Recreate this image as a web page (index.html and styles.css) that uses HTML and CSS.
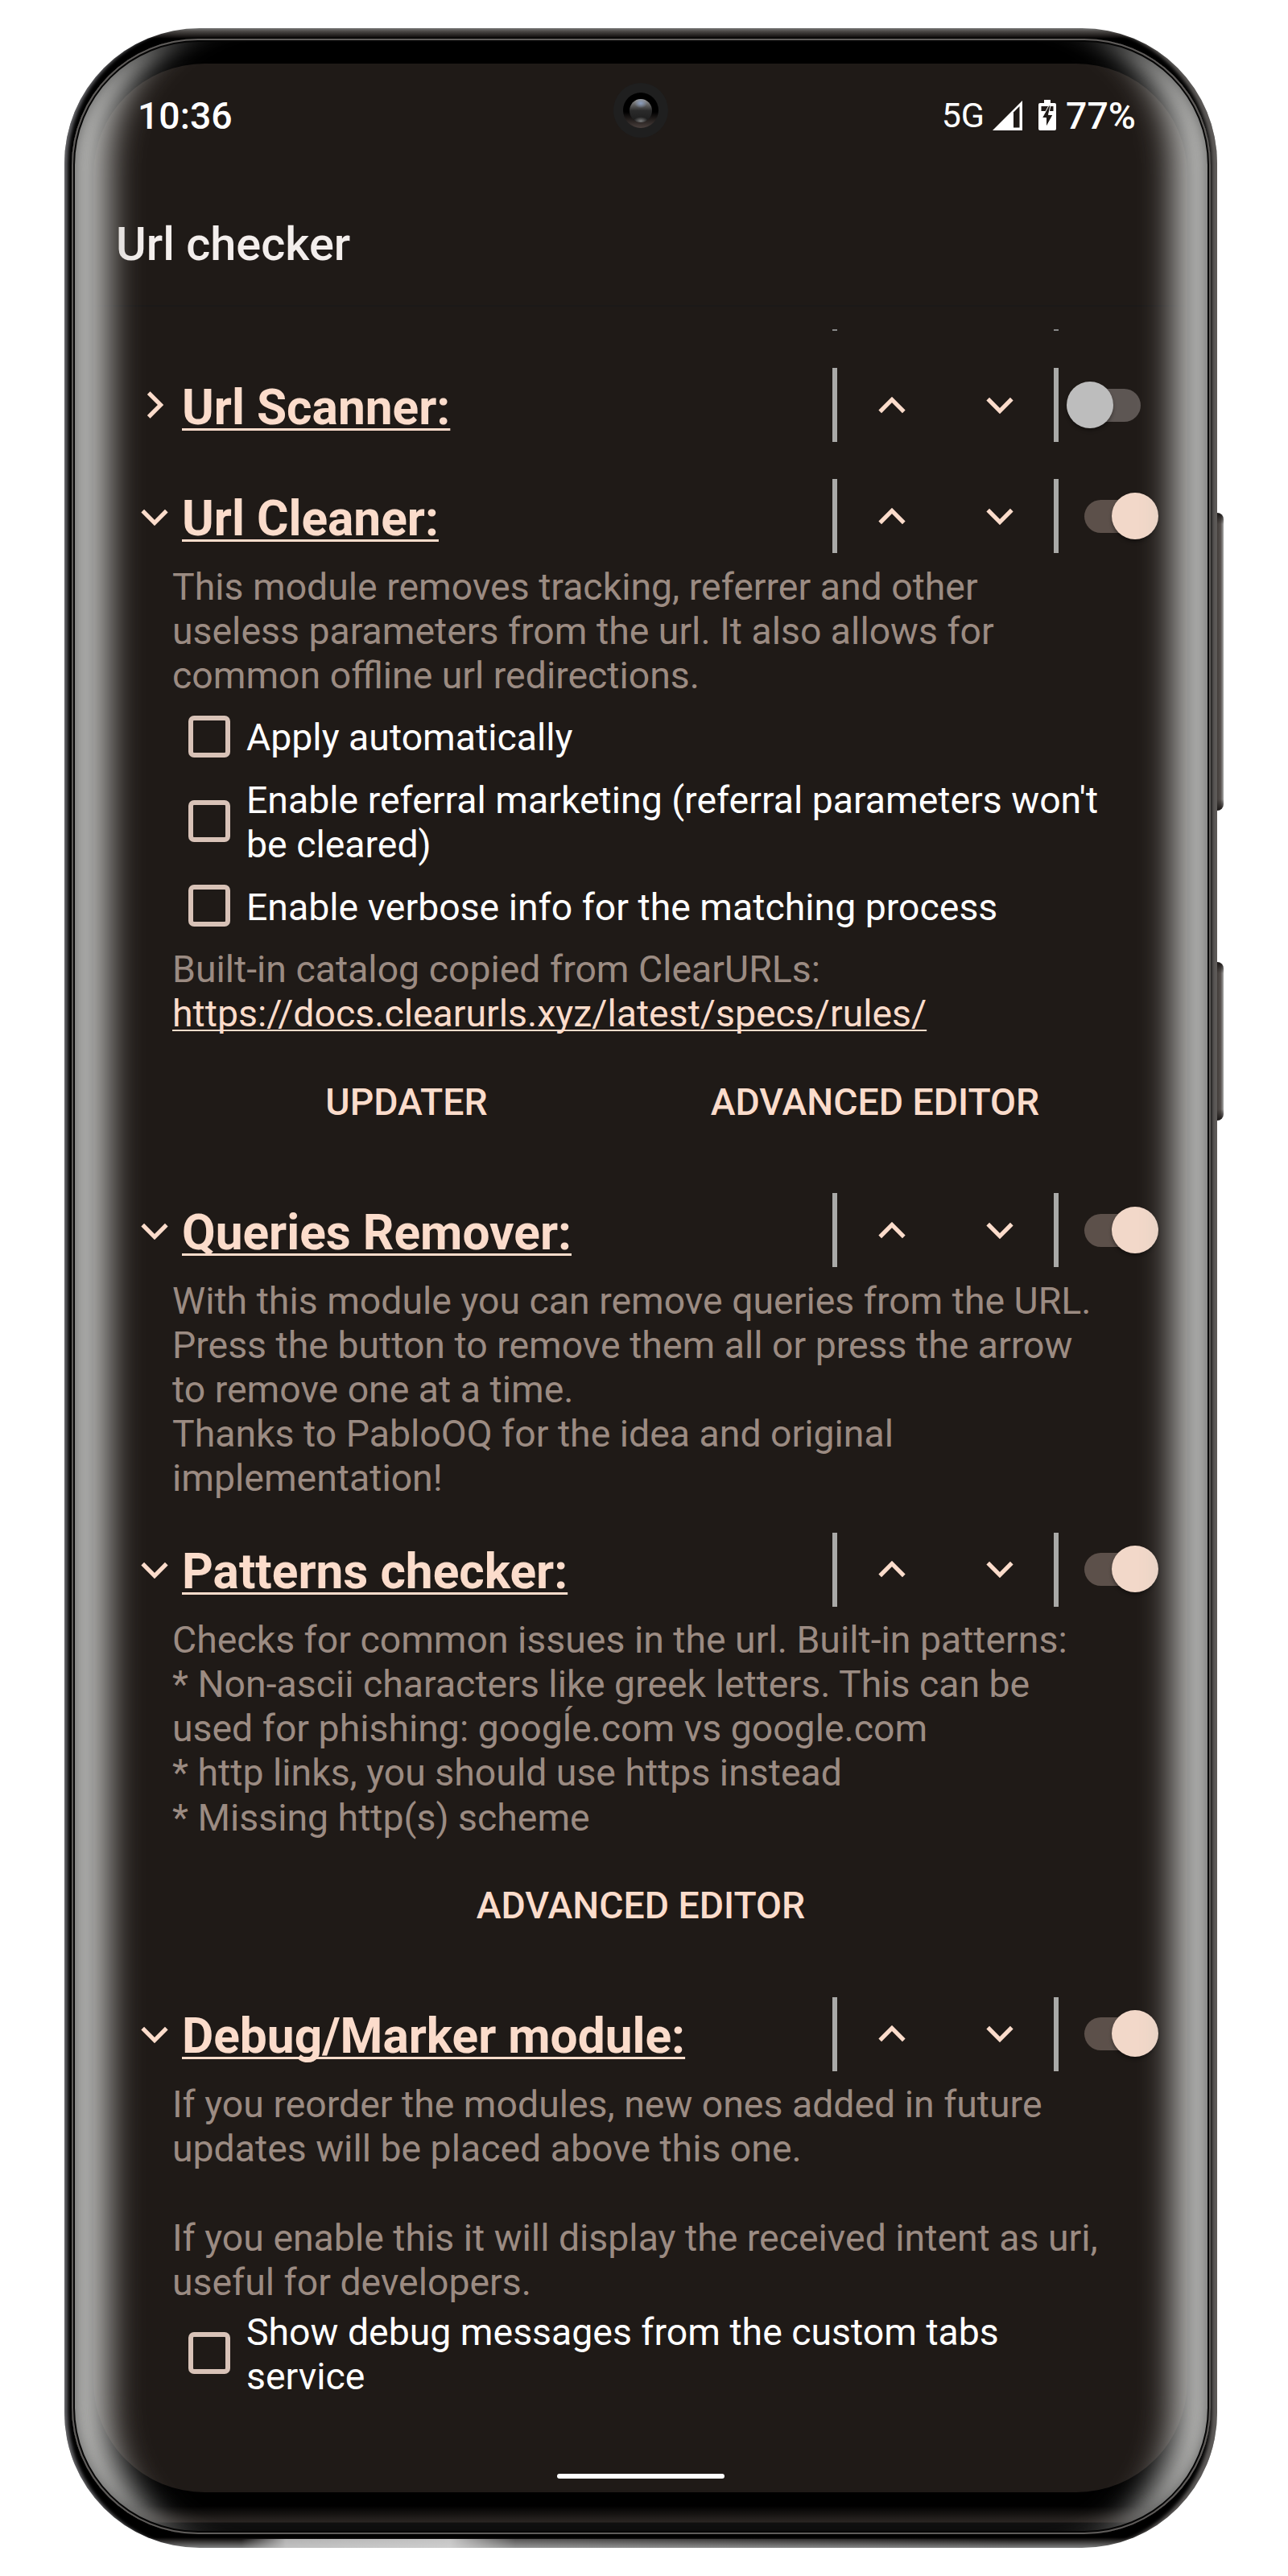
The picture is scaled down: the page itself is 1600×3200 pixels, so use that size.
FILE: index.html
```html
<!DOCTYPE html>
<html lang="en">
<head>
<meta charset="utf-8">
<title>Url checker</title>
<link rel="stylesheet" href="styles.css">
</head>
<body>
<svg class="defs" width="0" height="0" aria-hidden="true">
  <symbol id="down" viewBox="0 0 34 21"><path d="M2.2 2.700 L17 17.500 L31.8 2.700" fill="none" stroke="currentColor" stroke-width="5.2"/></symbol>
  <symbol id="up" viewBox="0 0 34 21"><path d="M2.2 18.300 L17 3.500 L31.8 18.300" fill="none" stroke="currentColor" stroke-width="5.2"/></symbol>
  <symbol id="right" viewBox="0 0 21 34"><path d="M2.700 2.2 L17.500 17 L2.700 31.8" fill="none" stroke="currentColor" stroke-width="5.2"/></symbol>
</svg>
<div class="phone">
  <span class="key key-volume"></span>
  <span class="key key-power"></span>
  <div class="rim">
    <div class="glass">
      <div class="screen">
        <header class="status">
          <span class="clock">10:36</span>
          <div class="status-right">
            <span class="net">5G</span>
            <svg class="signal" viewBox="0 0 37 37"><path d="M0 37 L37 0 V37 Z" fill="#fff"/><path d="M26 14.5 L33.5 7 V33.5 H26 Z" fill="#1f1a17"/></svg>
            <svg class="battery" viewBox="0 0 22 38"><path d="M7 0 H15 V4 H20 Q22 4 22 6 V36 Q22 38 20 38 H2 Q0 38 0 36 V6 Q0 4 2 4 H7 Z" fill="#fff"/><path d="M3.5 8 H18.500 V14 H3.500 Z" fill="#1f1a17"/><path d="M13 7 L4.500 22.500 H9.500 V34 L18 18.500 H12.500 L15 7 Z" fill="#1f1a17" stroke="#fff" stroke-width="1"/></svg>
            <span class="charge">77%</span>
          </div>
          <span class="camera"><span class="lens"></span></span>
        </header>
        <h1 class="app-title">Url checker</h1>
        <main class="list">
          <div class="cut"><i></i><i></i></div>

          <section class="module">
            <div class="head">
              <svg class="fold fold-closed"><use href="#right"/></svg><h2>Url Scanner:</h2>
              <div class="move"><svg><use href="#up"/></svg><svg><use href="#down"/></svg></div>
              <span class="switch off"></span>
            </div>
          </section>

          <section class="module">
            <div class="head">
              <svg class="fold"><use href="#down"/></svg><h2>Url Cleaner:</h2>
              <div class="move"><svg><use href="#up"/></svg><svg><use href="#down"/></svg></div>
              <span class="switch"></span>
            </div>
            <div class="body">
              <p>This module removes tracking, referrer and other<br>useless parameters from the url. It also allows for<br>common offline url redirections.</p>
              <div class="checks">
                <label class="check"><span class="box"></span><span>Apply automatically</span></label>
                <label class="check"><span class="box"></span><span>Enable referral marketing (referral parameters won't<br>be cleared)</span></label>
                <label class="check"><span class="box"></span><span>Enable verbose info for the matching process</span></label>
              </div>
              <p>Built-in catalog copied from ClearURLs:<br><a>https://docs.clearurls.xyz/latest/specs/rules/</a></p>
              <div class="buttons"><button>UPDATER</button><button>ADVANCED EDITOR</button></div>
            </div>
          </section>

          <section class="module">
            <div class="head">
              <svg class="fold"><use href="#down"/></svg><h2>Queries Remover:</h2>
              <div class="move"><svg><use href="#up"/></svg><svg><use href="#down"/></svg></div>
              <span class="switch"></span>
            </div>
            <div class="body">
              <p>With this module you can remove queries from the URL.<br>Press the button to remove them all or press the arrow<br>to remove one at a time.<br>Thanks to PabloOQ for the idea and original<br>implementation!</p>
            </div>
          </section>

          <section class="module">
            <div class="head">
              <svg class="fold"><use href="#down"/></svg><h2>Patterns checker:</h2>
              <div class="move"><svg><use href="#up"/></svg><svg><use href="#down"/></svg></div>
              <span class="switch"></span>
            </div>
            <div class="body">
              <p>Checks for common issues in the url. Built-in patterns:<br>* Non-ascii characters like greek letters. This can be<br>used for phishing: googĺe.com vs google.com<br>* http links, you should use https instead<br>* Missing http(s) scheme</p>
              <div class="buttons"><button>ADVANCED EDITOR</button></div>
            </div>
          </section>

          <section class="module">
            <div class="head">
              <svg class="fold"><use href="#down"/></svg><h2>Debug/Marker module:</h2>
              <div class="move"><svg><use href="#up"/></svg><svg><use href="#down"/></svg></div>
              <span class="switch"></span>
            </div>
            <div class="body">
              <p>If you reorder the modules, new ones added in future<br>updates will be placed above this one.<br><br>If you enable this it will display the received intent as uri,<br>useful for developers.</p>
              <label class="check tight"><span class="box"></span><span>Show debug messages from the custom tabs<br>service</span></label>
            </div>
          </section>
        </main>
        <span class="home"></span>
      </div>
    </div>
  </div>
</div>
</body>
</html>
```
FILE: styles.css
```css
* { box-sizing: border-box; }
body {
  margin: 0;
  width: 1600px;
  height: 3200px;
  overflow: hidden;
  background: #fff;
  font-family: Roboto, sans-serif;
  font-size: 46.4px;
  line-height: 55.1px;
  color: #fff;
}
h1, h2, p { margin: 0; font-weight: inherit; font-size: inherit; }
.defs { position: absolute; }

/* Phone shell */
.phone {
  position: relative;
  width: 1432px;
  height: 3130px;
  margin: 35px 0 0 80px;
}
.key {
  position: absolute;
  left: 1431px;
  width: 9px;
  border-radius: 0 8px 8px 0;
  background:
    linear-gradient(#1a1716, transparent 14px, transparent calc(100% - 14px), #1a1716),
    linear-gradient(90deg, #3d3835, #57514e 60%, #aaa);
}
.key-volume { top: 602px; height: 370px; }
.key-power { top: 1160px; height: 197px; }
.rim {
  position: relative;
  height: 3130px;
  padding: 13px 8px 17px 9px;
  border-radius: 168px;
  background:
    linear-gradient(90deg, transparent 220px, rgba(205, 205, 205, .85) 275px, rgba(215, 215, 215, .9) 480px, rgba(180, 180, 180, .4) 560px, transparent 1180px) 0 100% / 100% 11px no-repeat,
    linear-gradient(#777, #4a4745 4px, #1b1817 10px, #000 13px, #000 3117px, #2a2827 3121px, #777 3129px);
  box-shadow: inset 8px 0 4px -4px #66666a, inset -11px 0 4px -4px #5d5a58;
  overflow: hidden;
}
.glass {
  position: relative;
  height: 3100px;
  padding: 31px 29px 52px 27px;
  border-radius: 157px;
  background: linear-gradient(#000 0, #000 3065px, #2d2825 3085px, #111 3086px);
}
/* Reflections on the curved edges */
.glass::after {
  content: "";
  position: absolute;
  inset: 0;
  border-radius: 157px;
  pointer-events: none;
  box-shadow:
    inset 0 0 0 2px #5f5c5a,
    inset 0 0 0 4px #060606,
    inset 0 0 22px 0 rgba(0, 0, 0, .7),
    inset 92px 0 42px -46px #b8b8b6,
    inset -92px 0 42px -46px #b8b8b6;
}
.screen {
  position: relative;
  height: 3017px;
  border-radius: 138px;
  background: #1f1a17;
  display: flex;
  flex-direction: column;
  overflow: hidden;
}

/* Status bar */
.status {
  position: relative;
  height: 130px;
  padding: 38px 64px 0 55px;
  display: flex;
  justify-content: space-between;
  font-weight: 500;
}
.status-right { display: flex; }
.net { font-weight: 400; font-size: 43px; margin-top: -1px; }
.signal { width: 37px; height: 37px; margin: 8px 20px 0 10px; }
.battery { width: 22px; height: 38px; margin: 7px 12px 0 0; }
.camera {
  position: absolute;
  left: 646px;
  top: 24px;
  width: 68px;
  height: 68px;
  border-radius: 50%;
  background: #1f1f1f;
  padding: 12px;
}
.camera::before {
  content: "";
  display: block;
  height: 44px;
  border-radius: 50%;
  background: linear-gradient(#000 55%, #4a403d);
}
.lens {
  position: absolute;
  left: 20px;
  top: 20px;
  width: 28px;
  height: 29px;
  border-radius: 50%;
  background:
    radial-gradient(ellipse 8px 6px at 50% 18%, #8b9dbd, transparent),
    radial-gradient(ellipse 9px 5px at 50% 94%, #777, transparent),
    linear-gradient(#999, #2a2a2a 50%, #1c1c1c);
}

.app-title {
  height: 172px;
  padding: 59px 0 0 28px;
  font-size: 57.7px;
  line-height: 70px;
  font-weight: 500;
  color: #f3eeec;
  border-bottom: 2px solid #1b1918;
}

/* Module list */
.list { padding-left: 98px; }
.cut {
  display: flex;
  gap: 269px;
  height: 43px;
  padding: 28px 0 0 820px;
}
.cut i { width: 6px; height: 2px; background: #888; }
.module { margin-top: 20px; }
.head {
  display: flex;
  align-items: center;
  height: 118px;
  margin-left: -39px;
  color: #fbdccb;
}
.fold { width: 34px; height: 21px; margin: 2px 17px 0 0; }
.fold-closed { width: 21px; height: 34px; margin: 0 23px 0 7px; }
.head h2 {
  width: 808px;
  margin-top: 7px;
  font-size: 60.4px;
  line-height: 72px;
  font-weight: 700;
  white-space: nowrap;
  text-decoration: underline 3px;
  text-underline-offset: 5px;
  text-decoration-skip-ink: none;
}
.move {
  display: flex;
  align-items: center;
  justify-content: space-between;
  width: 281px;
  height: 92px;
  padding: 0 50px 0 51px;
  border: solid #a9a9a7;
  border-width: 0 6px;
}
.move svg { width: 34px; height: 21px; }
.switch {
  position: relative;
  width: 70px;
  height: 41px;
  margin-left: 32px;
  border-radius: 21px;
  background: #5c504a;
}
.switch::after {
  content: "";
  position: absolute;
  left: 34px;
  top: -9px;
  width: 58px;
  height: 58px;
  border-radius: 50%;
  background: #f2d8c9;
  box-shadow: 0 3px 4px rgba(0, 0, 0, .35);
}
.switch.off { background: #5d5653; }
.switch.off::after { left: -22px; background: #bdbdbd; }

.body { padding: 1.7px 0 6px; white-space: nowrap; }
.body p { color: #9b8b82; }
.body a { color: #fbdccb; text-decoration: underline 2px; text-underline-offset: 4px; text-decoration-skip-ink: none; }
.checks { padding: 11px 0; }
.check { display: flex; align-items: center; padding: 11px 0 11px 20px; }
.check.tight { padding-top: 7px; }
.box {
  width: 52px;
  height: 52px;
  margin: 0 20px 4px 0;
  border: 6px solid #d8c2b7;
  border-radius: 7px;
}
.buttons { display: flex; padding-top: 27px; height: 156px; margin-right: 97px; }
.buttons button {
  flex: 1;
  height: 110px;
  border: 0;
  background: none;
  color: #fbdccb;
  font: 500 46.4px/55px Roboto, sans-serif;
}
.home {
  position: absolute;
  left: 576px;
  top: 2994px;
  width: 208px;
  height: 6px;
  border-radius: 3px;
  background: #fff;
}
```
